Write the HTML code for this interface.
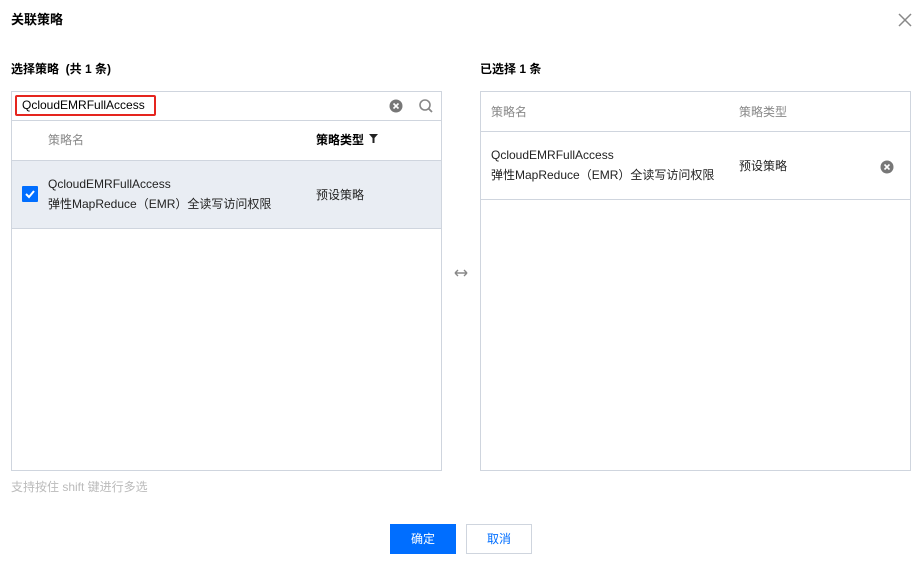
<!DOCTYPE html>
<html><head><meta charset="utf-8"><style>
*{margin:0;padding:0;box-sizing:border-box}
body{width:922px;height:561px;background:#fff;font-family:"Liberation Sans","Noto Sans CJK SC",sans-serif;font-size:12px;color:#000;position:relative;overflow:hidden}
.a{position:absolute}
.box{position:absolute;border:1px solid #cfd5de;background:#fff}
.line{position:absolute;left:0;right:0;height:1px;background:#cfd5de}
.g{color:#888}
</style></head><body>
<div class="a" style="left:11px;top:9px;font-size:13px;font-weight:bold;color:#000">关联策略</div>
<svg class="a" style="left:898px;top:13px" width="14" height="14"><path d="M1 1L13 13M13 1L1 13" stroke="#888" stroke-width="1.5"/></svg>
<div class="a" style="left:11px;top:60px;font-weight:bold">选择策略 &nbsp;(共 1 条)</div>
<div class="a" style="left:480px;top:60px;font-weight:bold">已选择 1 条</div>

<div class="box" style="left:11px;top:91px;width:431px;height:380px">
 <div class="a" style="left:3px;top:3px;width:141px;height:21px;border:2px solid #e5251e;border-radius:2px"></div>
 <div class="a" style="left:10px;top:6px">QcloudEMRFullAccess</div>
 <svg class="a" style="left:377px;top:7px" width="14" height="14"><circle cx="7" cy="7" r="6.5" fill="#777"/><path d="M4.5 4.5L9.5 9.5M9.5 4.5L4.5 9.5" stroke="#fff" stroke-width="1.6"/></svg>
 <svg class="a" style="left:406px;top:6px" width="16" height="16"><circle cx="7" cy="7" r="5" fill="none" stroke="#888" stroke-width="1.6"/><path d="M10.5 10.5L14 14" stroke="#888" stroke-width="1.8"/></svg>
 <div class="line" style="top:28px"></div>
 <div class="a g" style="left:36px;top:39px">策略名</div>
 <div class="a" style="left:304px;top:39px;font-weight:bold">策略类型</div>
 <svg class="a" style="left:357px;top:42px" width="10" height="10"><path d="M0 0H9L5.5 4V9H3.5V4Z" fill="#222"/></svg>
 <div class="line" style="top:68px"></div>
 <div class="a" style="left:0;right:0;top:69px;height:67px;background:#e9edf3"></div>
 <div class="a" style="left:10px;top:94px;width:16px;height:16px;background:#006eff;border-radius:1px"><svg width="16" height="16"><path d="M4 8L7 11L12 5" stroke="#fff" stroke-width="2" fill="none"/></svg></div>
 <div class="a" style="left:36px;top:85px;color:#222">QcloudEMRFullAccess</div>
 <div class="a" style="left:36px;top:103px;color:#222">弹性MapReduce（EMR）全读写访问权限</div>
 <div class="a" style="left:304px;top:94px;color:#222">预设策略</div>
 <div class="line" style="top:136px"></div>
</div>

<svg class="a" style="left:453px;top:268px" width="16" height="10"><path d="M2 5H14M2 5L5 2M2 5L5 8M14 5L11 2M14 5L11 8" stroke="#888" stroke-width="1.4" fill="none"/></svg>

<div class="box" style="left:480px;top:91px;width:431px;height:380px">
 <div class="a g" style="left:10px;top:11px">策略名</div>
 <div class="a g" style="left:258px;top:11px">策略类型</div>
 <div class="line" style="top:39px"></div>
 <div class="a" style="left:10px;top:56px;color:#222">QcloudEMRFullAccess</div>
 <div class="a" style="left:10px;top:74px;color:#222">弹性MapReduce（EMR）全读写访问权限</div>
 <div class="a" style="left:258px;top:65px;color:#222">预设策略</div>
 <svg class="a" style="left:399px;top:68px" width="14" height="14"><circle cx="7" cy="7" r="6.5" fill="#777"/><path d="M4.5 4.5L9.5 9.5M9.5 4.5L4.5 9.5" stroke="#fff" stroke-width="1.6"/></svg>
 <div class="line" style="top:107px"></div>
</div>

<div class="a" style="left:11px;top:478px;color:#bbb">支持按住 shift 键进行多选</div>
<div class="a" style="left:390px;top:524px;width:66px;height:30px;background:#006eff;color:#fff;text-align:center;line-height:30px">确定</div>
<div class="a" style="left:466px;top:524px;width:66px;height:30px;border:1px solid #cfd5de;color:#006eff;text-align:center;line-height:28px">取消</div>
</body></html>
